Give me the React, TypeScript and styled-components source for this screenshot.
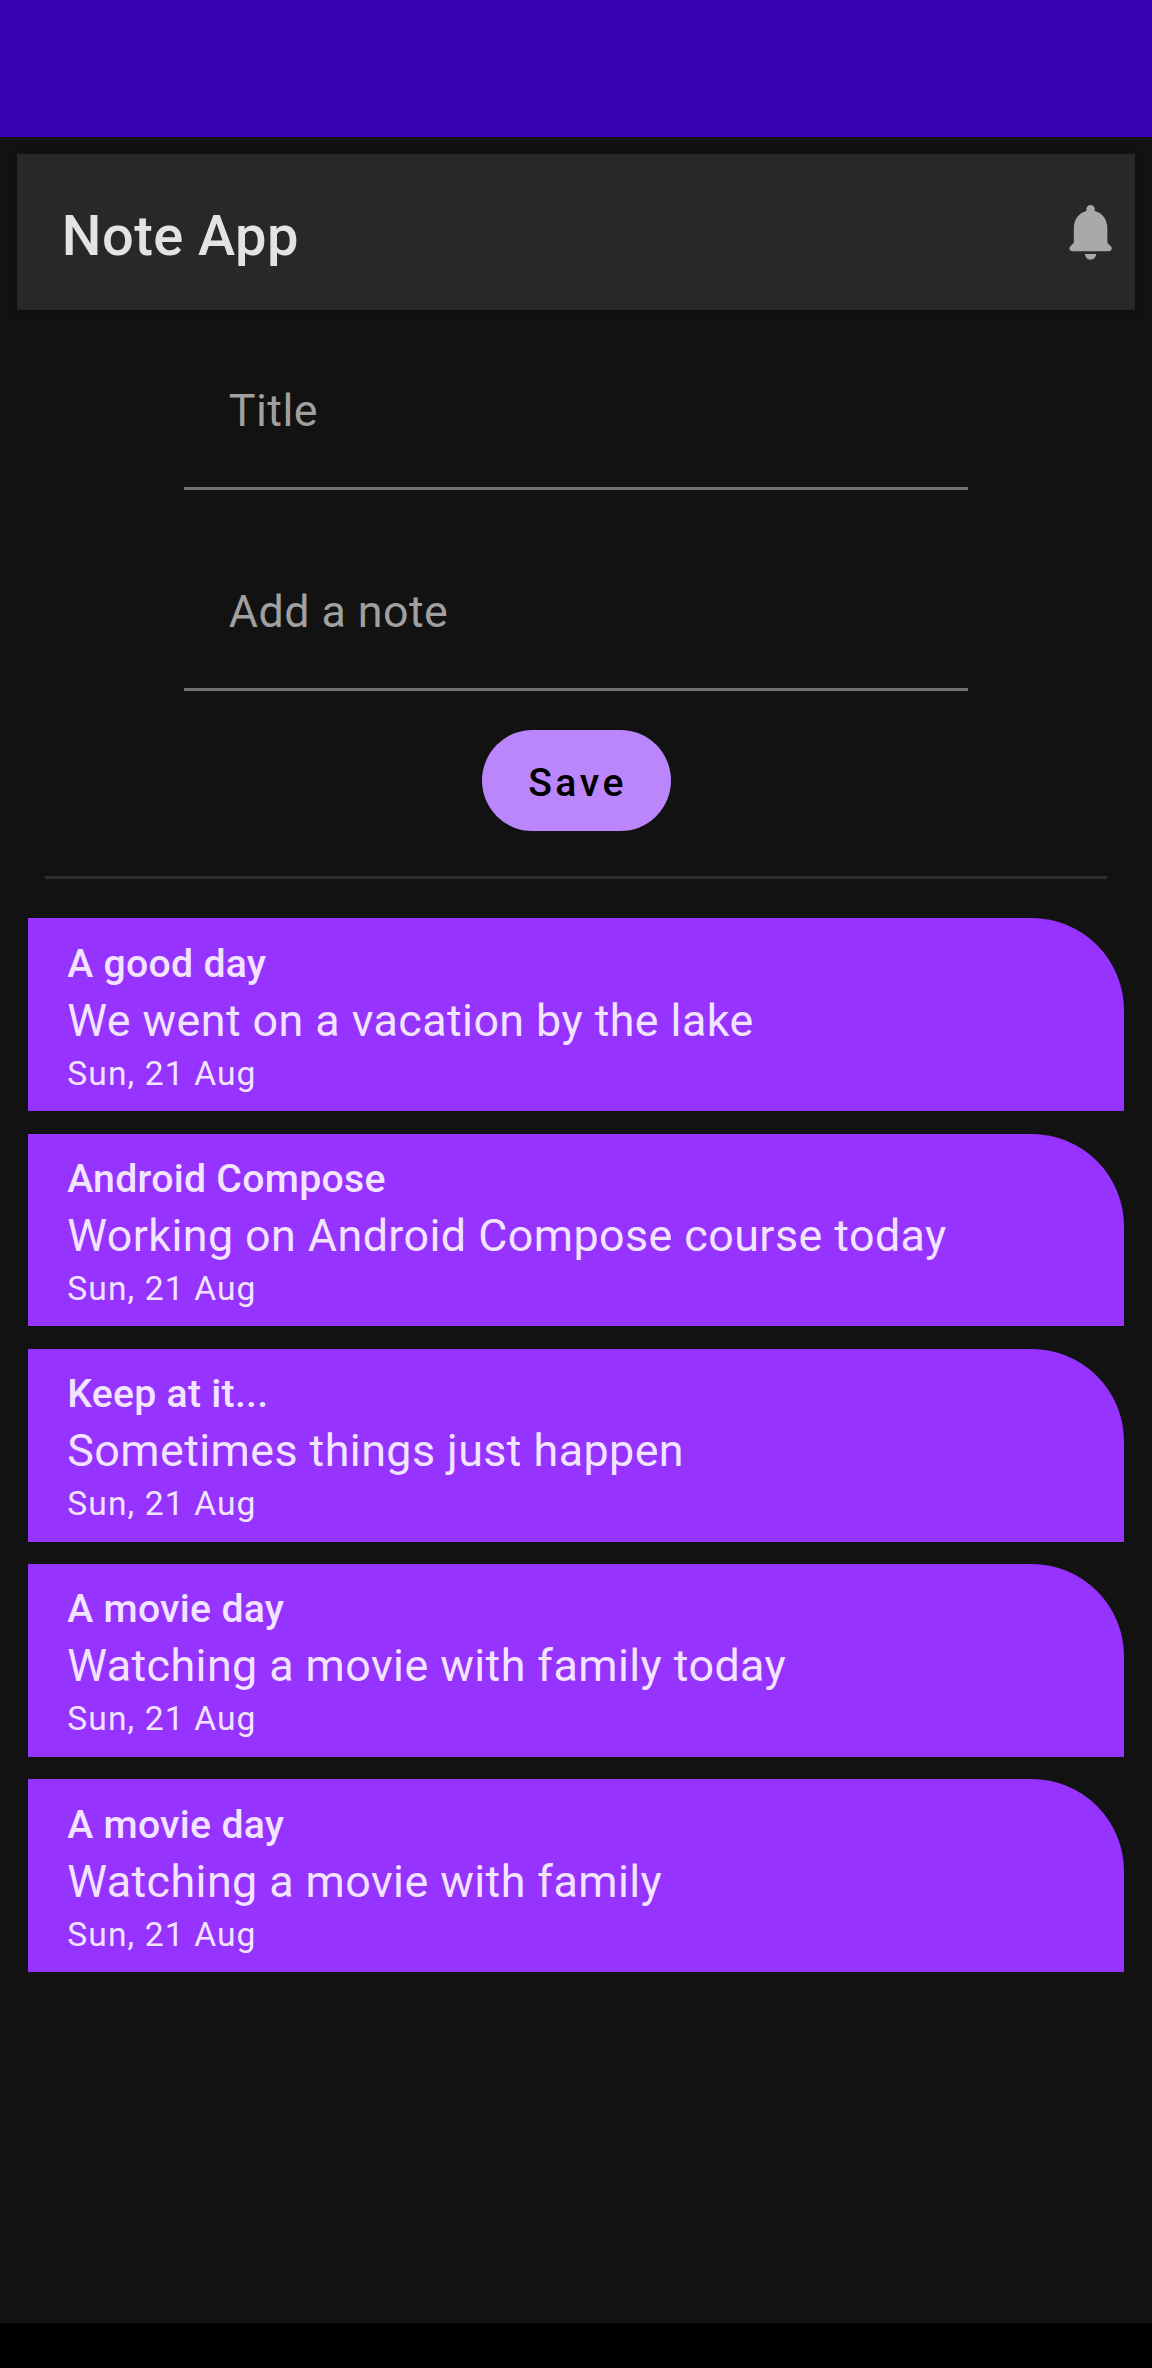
import React from "react";
import styled, { createGlobalStyle } from "styled-components";

const GlobalStyle = createGlobalStyle`
  * { box-sizing: border-box; }
  body { margin: 0; background: #121212; }
`;

const Screen = styled.div`
  width: 1152px;
  height: 2368px;
  display: flex;
  flex-direction: column;
  background: #121212;
  font-family: Roboto, "Liberation Sans", sans-serif;
  overflow: hidden;
`;

const StatusBar = styled.div`
  height: 137px;
  flex: none;
  background: #3700b3;
`;

const TopBar = styled.header`
  flex: none;
  margin: 16.6px 17px 0;
  height: 156.6px;
  padding: 0 11.2px 0 44.8px;
  display: flex;
  align-items: center;
  justify-content: space-between;
  background: #282828;
  box-shadow: 0 3px 8px rgba(0, 0, 0, 0.2);
`;

const AppTitle = styled.h1`
  margin: 7.6px 0 0;
  font-size: 56px;
  line-height: 66px;
  font-weight: 500;
  letter-spacing: 0.42px;
  color: #e3e3e3;
`;

const Bell = styled.svg`
  width: 67.2px;
  height: 67.2px;
  fill: #a9a9a9;
`;

const Form = styled.form`
  flex: none;
  display: flex;
  flex-direction: column;
  align-items: center;
  padding-top: 22.8px;
`;

const Field = styled.label`
  width: 784px;
  height: 156.8px;
  margin-bottom: 44.8px;
  padding: 50.6px 44.8px 0;
  border-bottom: 3px solid #717171;
  font-size: 44.8px;
  line-height: 53px;
  letter-spacing: 0.44px;
  color: #a0a0a0;
`;

const SaveButton = styled.button`
  width: 189px;
  height: 101px;
  margin-top: -6.2px;
  padding: 6px 0 0 3px;
  border: 0;
  border-radius: 51px;
  background: #bb86fc;
  color: #000;
  font: 500 39.2px/46px Roboto, "Liberation Sans", sans-serif;
  letter-spacing: 3.5px;
`;

const Divider = styled.hr`
  flex: none;
  width: 1062px;
  height: 3px;
  margin: 45px auto 39.4px;
  border: 0;
  background: #2e2e2e;
`;

const NoteList = styled.main`
  flex: 1;
  display: flex;
  flex-direction: column;
  gap: 22.4px;
  padding: 0 28px;
`;

const NoteCard = styled.article`
  height: 192.8px;
  padding: 21.5px 39.2px 0;
  border-top-right-radius: 92.4px;
  background: #9633ff;
  color: #f2e4ff;
`;

const NoteTitle = styled.h2`
  margin: 0;
  font-size: 39.2px;
  line-height: 48px;
  font-weight: 500;
  letter-spacing: 0.28px;
`;

const NoteText = styled.p`
  margin: 0;
  padding-top: 6px;
  font-size: 44.8px;
  line-height: 53px;
  letter-spacing: 0.44px;
`;

const NoteDate = styled.time`
  display: block;
  padding-top: 7px;
  font-size: 33.6px;
  line-height: 40px;
  letter-spacing: 1.12px;
`;

const NavigationBar = styled.div`
  flex: none;
  height: 45px;
  background: #000;
`;

const notes = [
  { title: "A good day", text: "We went on a vacation by the lake" },
  { title: "Android Compose", text: "Working on Android Compose course today" },
  { title: "Keep at it...", text: "Sometimes things just happen" },
  { title: "A movie day", text: "Watching a movie with family today" },
  { title: "A movie day", text: "Watching a movie with family" },
];

export default function App() {
  return (
    <>
      <GlobalStyle />
      <Screen>
        <StatusBar />
        <TopBar>
          <AppTitle>Note App</AppTitle>
          <Bell viewBox="0 0 24 24" aria-hidden="true">
            <path d="M12 22c1.1 0 2-.9 2-2h-4c0 1.1.89 2 2 2zm6-6v-5c0-3.07-1.63-5.64-4.5-6.32V4c0-.83-.67-1.5-1.5-1.5s-1.5.67-1.5 1.5v.68C7.64 5.36 6 7.92 6 11v5l-1.29 1.29c-.63.63-.19 1.71.7 1.71h13.17c.89 0 1.34-1.08.71-1.71L18 16z" />
          </Bell>
        </TopBar>
        <Form>
          <Field>Title</Field>
          <Field>Add a note</Field>
          <SaveButton type="button">Save</SaveButton>
        </Form>
        <Divider />
        <NoteList>
          {notes.map((note, i) => (
            <NoteCard key={i}>
              <NoteTitle>{note.title}</NoteTitle>
              <NoteText>{note.text}</NoteText>
              <NoteDate>Sun, 21 Aug</NoteDate>
            </NoteCard>
          ))}
        </NoteList>
        <NavigationBar />
      </Screen>
    </>
  );
}
